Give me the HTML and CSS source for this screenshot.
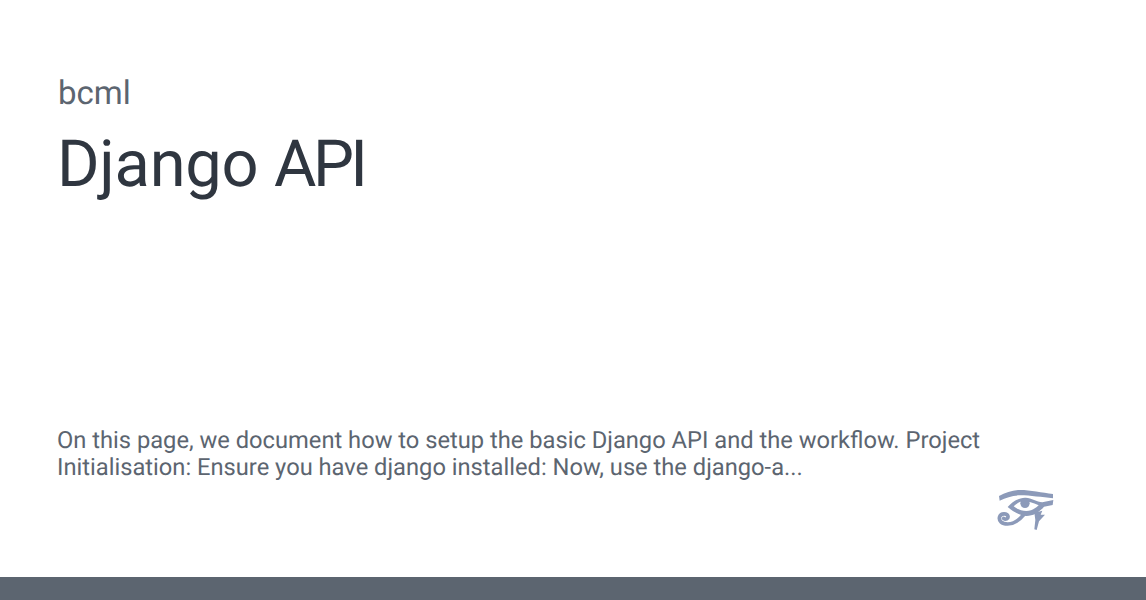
FILE: index.html
```html
<!DOCTYPE html>
<html lang="en">
<head>
<meta charset="utf-8">
<title>Django API</title>
<link rel="stylesheet" href="styles.css">
</head>
<body>
<div class="card">
  <main class="content">
    <header class="heading">
      <div class="site">bcml</div>
      <h1 class="title">Django <span class="tight">API</span></h1>
    </header>
    <div class="lower">
      <p class="description">On this page, we document how to setup the basic Django API and the workflow. Project Initialisation: Ensure you have django installed: Now, use the django-a...</p>
      <div class="logo-row">
        <svg class="logo" viewBox="0 3 240 180" aria-hidden="true">
          <path class="fill" d="M42 48 C62 38 85 30 106 30 C135 30 172 38 204 42 L204 55 C172 52 135 46 106 46 C85 46 64 52 44 62 Z"/>
          <path class="fill" d="M68 81 C85 62 105 52 122 53 C140 54 155 65 172 67 L205 60 L203 75 L177 80 C165 95 145 108 125 108 C105 108 85 95 68 81 Z"/>
          <path class="white" d="M86 79 C94 71 103 66 112 64 C122 62 140 66 161 76 C150 87 137 93 124 93 C110 93 97 87 86 79 Z"/>
          <circle class="fill" cx="120" cy="70" r="14"/>
          <path class="stroke" d="M118 102 C105 118 90 132 68 132 C50 132 40 122 44 110 C48 99 66 99 69 109 C70 116 62 120 56 115"/>
          <path class="fill" d="M148 98 L172 92 L167 104 L180 104 L162 124 L155 150 L148 148 L151 120 Z"/>
        </svg>
      </div>
    </div>
  </main>
  <div class="bar"></div>
</div>
</body>
</html>
```

FILE: styles.css
```css
* { box-sizing: border-box; }
html, body { margin: 0; padding: 0; background: #fff; }
body { font-family: Roboto, "Liberation Sans", sans-serif; text-rendering: geometricPrecision; }
.card { width: 1146px; height: 600px; display: flex; flex-direction: column; overflow: hidden; }
.content { flex: 1; display: flex; flex-direction: column; justify-content: space-between; padding: 75px 57px 0 57px; min-height: 0; }
.site { font-size: 33px; line-height: 38px; color: #5c6570; padding-left: 1px; }
.title { margin: 13px 0 0; font-size: 65px; line-height: 77px; font-weight: 400; letter-spacing: -0.3px; color: #2f3640; }
.tight { letter-spacing: -0.055em; }
.description { margin: 0; font-size: 23.7px; line-height: 27px; color: #5c6570; }
.lower { display: flex; flex-direction: column; }
.logo-row { display: flex; justify-content: flex-end; padding: 0 24px 36px 0; }
.logo { width: 80px; height: 60px; display: block; }
.fill { fill: #8c9ab9; }
.white { fill: #fff; }
.stroke { fill: none; stroke: #8c9ab9; stroke-width: 11; stroke-linecap: round; }
.bar { height: 23px; flex: none; background: #5c6570; }
```
